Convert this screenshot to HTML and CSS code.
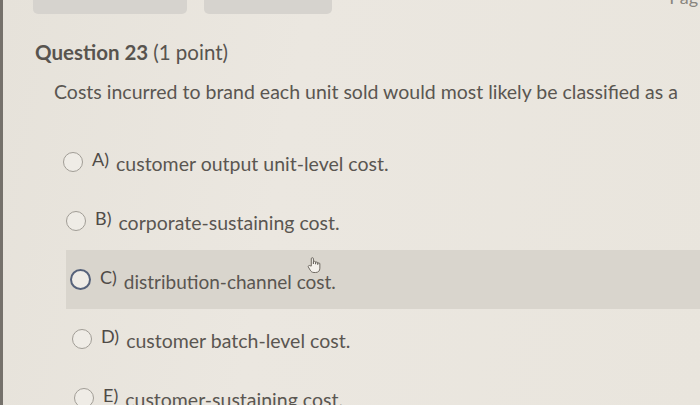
FILE: index.html
```html
<!DOCTYPE html>
<html>
<head>
<meta charset="utf-8">
<link rel="stylesheet" href="styles.css">
</head>
<body>
<div class="page">
  <div class="topbar">
    <div class="tb-btn tb-btn-1"></div>
    <div class="tb-btn tb-btn-2"></div>
    <div class="tb-page">Pag</div>
  </div>
  <h2 class="q-title"><span class="q-num">Question 23</span> <span class="q-pts">(1 point)</span></h2>
  <p class="q-text">Costs incurred to brand each unit sold would most likely be classified as a</p>
  <ul class="options">
    <li class="opt opt-a"><span class="radio"></span><span class="letter">A)</span><span class="otext">customer output unit-level cost.</span></li>
    <li class="opt opt-b"><span class="radio"></span><span class="letter">B)</span><span class="otext">corporate-sustaining cost.</span></li>
    <li class="opt opt-c hover"><span class="radio focus"></span><span class="letter">C)</span><span class="otext">distribution-channel cost.</span><span class="cursor">
      <svg width="15" height="18" viewBox="0 0 14 16"><path d="M4 9 V2.2 a1 1 0 0 1 2 0 V7 V5.5 a1 1 0 0 1 2 0 V7.2 V6.2 a1 1 0 0 1 2 0 V7.6 V7 a1 1 0 0 1 2 0 V11 c0 2.5 -1.5 4 -4 4 h-1.5 c-1.8 0 -2.6 -0.8 -3.5 -2.2 L1.2 9.8 a1 1 0 0 1 1.6 -1.1 Z" fill="#f4f1ec" stroke="#6a655e" stroke-width="0.9" stroke-linejoin="round"/></svg></span></li>
    <li class="opt opt-d"><span class="radio"></span><span class="letter">D)</span><span class="otext">customer batch-level cost.</span></li>
    <li class="opt opt-e"><span class="radio"></span><span class="letter">E)</span><span class="otext">customer-sustaining cost.</span></li>
  </ul>
</div>
</body>
</html>
```

FILE: styles.css
```css
html, body {
  margin: 0;
  padding: 0;
}
body {
  background: #e9e5de;
  font-family: Lato, "Open Sans", sans-serif;
  color: #55514c;
  width: 700px;
  height: 405px;
  overflow: hidden;
}
.page {
  border-left: 3px solid #75716b;
  height: 405px;
  box-sizing: border-box;
  background: linear-gradient(100deg, #e6e2da 0%, #ebe7e0 40%, #e9e5dd 100%);
  overflow: hidden;
}
.topbar {
  display: flex;
  height: 14px;
  position: relative;
}
.tb-btn {
  background: #d6d3ce;
  border-radius: 0 0 5px 5px;
  height: 14px;
}
.tb-btn-1 {
  margin-left: 30px;
  width: 154px;
}
.tb-btn-2 {
  margin-left: 17px;
  width: 128px;
}
.tb-page {
  position: absolute;
  right: 2px;
  top: -14px;
  font-size: 18px;
  color: #8a867f;
}
.q-title {
  margin: 26px 0 0 32px;
  font-size: 20.5px;
  line-height: 24px;
  font-weight: 700;
  color: #58544f;
}
.q-pts {
  font-weight: 400;
}
.q-text {
  margin: 16px 0 0 51px;
  font-size: 19.5px;
  line-height: 24px;
  color: #5a5651;
}
.options {
  list-style: none;
  margin: 28px 0 0 60px;
  padding: 0;
}
.opt {
  display: flex;
  align-items: center;
  height: 59px;
  font-size: 18px;
  position: relative;
}
.opt-a { padding-left: 0; }
.opt-b { padding-left: 3px; }
.opt-d { padding-left: 9px; }
.opt-e { padding-left: 11px; }
.hover {
  background: #d9d5cd;
  margin-left: 3px;
  padding-left: 4px;
}
.radio {
  width: 18px;
  height: 18px;
  border: 1.5px solid #a19d96;
  border-radius: 50%;
  background: #efece6;
  flex: none;
}
.radio.focus {
  border: 2.5px solid #56627a;
  width: 17px;
  height: 17px;
}
.letter {
  margin-left: 9px;
  font-size: 18px;
  position: relative;
  top: -3px;
  color: #4f4b47;
}
.otext {
  margin-left: 7px;
  position: relative;
  top: 2px;
  font-size: 19.5px;
  color: #5a5651;
}
.opt-c .otext { top: 2px; font-size: 19px; }
.cursor {
  position: absolute;
  left: 241px;
  top: 6px;
}
```
